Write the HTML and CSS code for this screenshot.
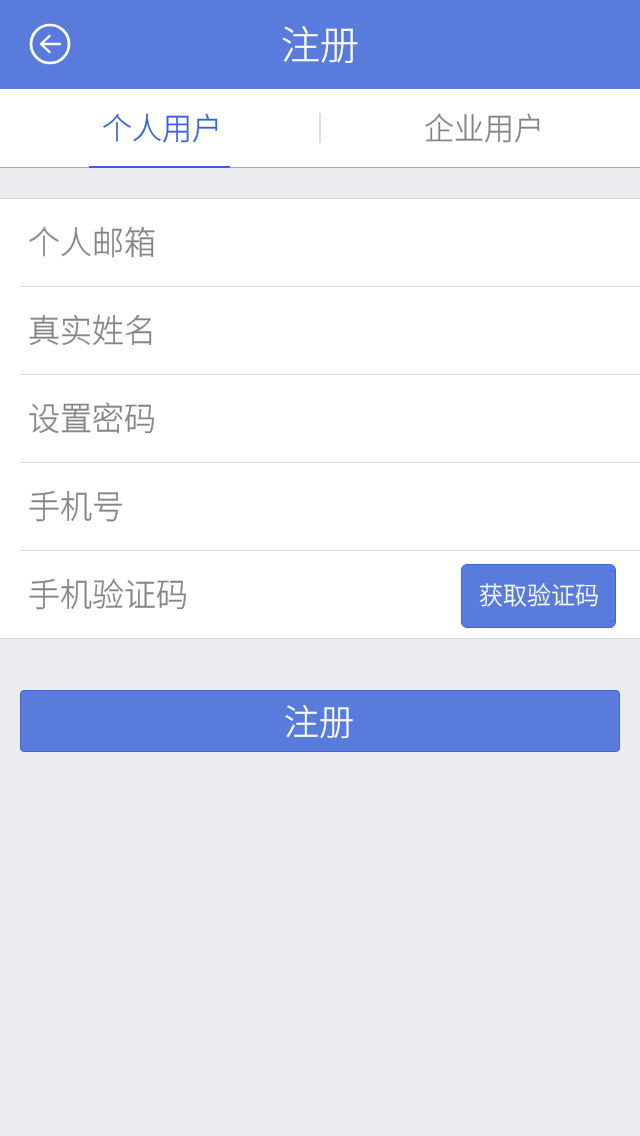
FILE: index.html
```html
<!DOCTYPE html>
<html lang="zh-CN">
<head>
<meta charset="utf-8">
<title>注册</title>
<link rel="stylesheet" href="styles.css">
</head>
<body>
<header class="header">
  <button class="back" aria-label="返回">
    <svg width="42" height="42" viewBox="0 0 42 42" fill="none" stroke="#fff">
      <circle cx="21" cy="21" r="19" stroke-width="2.700"/>
      <path d="M12 21H31M20.500 13L12 21L20.500 29" stroke-width="2.400" stroke-linejoin="round" stroke-linecap="round"/>
    </svg>
  </button>
  <h1 class="title"><span class="txt">注册</span></h1>
</header>
<nav class="tabs">
  <div class="tab tab-active"><span class="txt">个人用户</span></div>
  <div class="tab-sep"></div>
  <div class="tab"><span class="txt">企业用户</span></div>
</nav>
<section class="form">
  <div class="row"><span class="txt placeholder">个人邮箱</span></div>
  <div class="row"><span class="txt placeholder">真实姓名</span></div>
  <div class="row"><span class="txt placeholder">设置密码</span></div>
  <div class="row"><span class="txt placeholder">手机号</span></div>
  <div class="row"><span class="txt placeholder">手机验证码</span><button class="code-btn"><span class="txt">获取验证码</span></button></div>
</section>
<div class="submit-wrap"><button class="submit"><span class="txt">注册</span></button></div>
</body>
</html>
```
FILE: styles.css
```css
* { box-sizing: border-box; }
html, body { margin: 0; padding: 0; }
body {
  width: 640px;
  height: 1136px;
  overflow: hidden;
  background: #ebecf0;
  font-family: "Noto Sans CJK SC", "Noto Sans", sans-serif;
  font-weight: 300;
}
button { font-family: inherit; font-weight: inherit; }
.txt { display: inline-block; will-change: transform; -webkit-text-stroke: 0.3px currentColor; }
.header {
  height: 89px;
  background: #587bdc;
  display: flex;
  align-items: center;
  justify-content: center;
  position: relative;
}
.back {
  position: absolute;
  left: 29px;
  top: 23px;
  width: 42px;
  height: 42px;
  padding: 0;
  border: 0;
  background: none;
  display: block;
}
.back svg { display: block; }
.title {
  margin: 0 0 6px 0;
  color: #fff;
  font-size: 39px;
  font-weight: 300;
  line-height: 60px;
}
.tabs {
  height: 79px;
  background: #fff;
  border-bottom: 1px solid #a8a8a8;
  display: flex;
  align-items: center;
}
.tab {
  flex: 1;
  height: 78px;
  display: flex;
  justify-content: center;
  align-items: center;
  color: #848484;
  font-size: 30px;
  padding: 0 0 5px 6px;
}
.tab-active {
  color: #3b62d8;
  position: relative;
  padding-left: 5px;
}
.tab-active::after {
  content: "";
  position: absolute;
  left: 89px;
  width: 141px;
  bottom: -1px;
  height: 2px;
  background: #3b62d8;
}
.tab-sep {
  width: 2px;
  height: 30px;
  margin-left: 1px;
  background: #dedede;
}
.form {
  margin-top: 30px;
  background: #fff;
  border-top: 1px solid #d8d8d8;
  border-bottom: 1px solid #d8d8d8;
}
.row {
  height: 88px;
  margin-left: 20px;
  padding: 0 24px 0 8px;
  display: flex;
  align-items: center;
  justify-content: space-between;
  border-bottom: 1px solid #d8d8d8;
  color: #858585;
  font-size: 32px;
}
.row:last-child { height: 87px; border-bottom: 0; }
.placeholder { margin-bottom: 5px; }
.code-btn {
  width: 155px;
  height: 64px;
  margin-top: 2px;
  padding: 0 0 4px;
  background: #587bdc;
  border: 1px solid #3f65d6;
  border-radius: 6px;
  color: #fff;
  font-size: 24px;
}
.submit-wrap { padding: 51px 20px 0; }
.submit {
  display: block;
  width: 100%;
  height: 62px;
  padding: 0 2px 4px 0;
  background: #587bdc;
  border: 1px solid #3f65d6;
  border-radius: 4px;
  color: #fff;
  font-size: 35px;
}
```
